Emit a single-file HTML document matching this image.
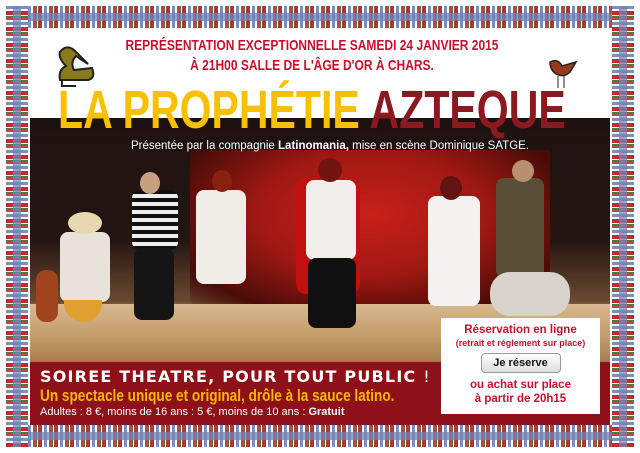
<!DOCTYPE html><html><head><meta charset="utf-8"><style>
*{margin:0;padding:0;box-sizing:border-box}
body{width:640px;height:453px;overflow:hidden;background:#fff;font-family:"Liberation Sans",sans-serif;position:relative}
.a{position:absolute}
.bh{position:absolute;background:
linear-gradient(180deg,transparent 0 7px,rgba(111,134,182,.75) 7px 15px,transparent 15px),
repeating-linear-gradient(90deg,#b83030 0 4px,#fff 4px 6px,#7a8fbf 6px 9px,#fff 9px 11px,#c84040 11px 14px,#3d7a3d 14px 15px,#fff 15px 16px)}
.bv{position:absolute;background:
linear-gradient(90deg,transparent 0 7px,rgba(111,134,182,.75) 7px 15px,transparent 15px),
repeating-linear-gradient(0deg,#b83030 0 4px,#fff 4px 6px,#7a8fbf 6px 9px,#fff 9px 11px,#c84040 11px 14px,#3d7a3d 14px 15px,#fff 15px 16px)}
.t{color:#c8102e;font-weight:bold;font-size:15px;white-space:nowrap;transform-origin:center;text-align:center}
.fig{position:absolute;border-radius:8px}
.nw{white-space:nowrap;transform-origin:left top}
</style></head><body>
<div class="bh" style="left:6px;top:6px;width:628px;height:22px"></div>
<div class="bh" style="left:6px;top:425px;width:628px;height:22px"></div>
<div class="bv" style="left:6px;top:6px;width:22px;height:441px"></div>
<div class="bv" style="left:612px;top:6px;width:22px;height:441px"></div>
<div class="a" style="left:28px;top:28px;width:584px;height:397px;background:#fff"></div>
<div class="a t" style="left:72px;top:37px;width:480px;transform:scaleX(.8)">REPRÉSENTATION EXCEPTIONNELLE SAMEDI 24 JANVIER 2015</div>
<div class="a t" style="left:72px;top:57px;width:480px;transform:scaleX(.8)">À 21H00 SALLE DE L'ÂGE D'OR À CHARS.</div>
<svg class="a" style="left:52px;top:42px" width="48" height="46"><path d="M8 10 Q14 2 22 8 L36 22 L24 14 Q18 20 22 28 L40 26 Q44 36 36 38 L8 38 Q6 28 14 24 Q6 16 8 10Z" fill="#8a7a1a" stroke="#222" stroke-width="2"/><path d="M10 38v6h14" stroke="#222" stroke-width="2" fill="none"/></svg>
<svg class="a" style="left:546px;top:52px" width="40" height="40"><path d="M4 10 Q12 6 16 14 L30 10 L24 20 Q18 26 10 22 Q4 18 4 10Z" fill="#9a3a1a" stroke="#222" stroke-width="1.5"/><path d="M12 24v12M18 24v12" stroke="#222"/></svg>
<div class="a" style="left:30px;top:118px;width:580px;height:244px;background:linear-gradient(180deg,#1e1210 0%,#241512 50%,#6a4a30 75%,#c9a070 82%,#b08858 100%)"></div>
<div class="a" style="left:190px;top:150px;width:360px;height:160px;background:radial-gradient(ellipse at 50% 40%,#c8201a 0%,#a01812 45%,#4a0c08 80%,transparent 100%)"></div>
<div class="a" style="left:30px;top:304px;width:580px;height:58px;background:linear-gradient(180deg,#d8b890,#c29a68 60%,#a67c4c)"></div>
<div class="fig" style="left:60px;top:232px;width:50px;height:70px;background:#e8e2da"></div>
<div class="fig" style="left:68px;top:212px;width:34px;height:22px;background:#e8d8b0;border-radius:50%"></div>
<div class="fig" style="left:36px;top:270px;width:22px;height:52px;background:#a0441e;border-radius:10px"></div>
<div class="fig" style="left:64px;top:300px;width:38px;height:22px;background:#e0a030;border-radius:0 0 20px 20px"></div>
<div class="fig" style="left:132px;top:190px;width:46px;height:60px;background:repeating-linear-gradient(0deg,#111 0 4px,#eee 4px 8px)"></div>
<div class="fig" style="left:134px;top:248px;width:40px;height:72px;background:#151515"></div>
<div class="fig" style="left:140px;top:172px;width:20px;height:22px;background:#c8a080;border-radius:50%"></div>
<div class="fig" style="left:196px;top:190px;width:50px;height:94px;background:#f0ece8"></div>
<div class="fig" style="left:212px;top:170px;width:20px;height:22px;background:#8a2010;border-radius:50%"></div>
<div class="fig" style="left:296px;top:178px;width:64px;height:116px;background:#c01010;border-radius:10px"></div>
<div class="fig" style="left:306px;top:180px;width:50px;height:80px;background:#f0eeea"></div>
<div class="fig" style="left:308px;top:258px;width:48px;height:70px;background:#101010"></div>
<div class="fig" style="left:318px;top:158px;width:24px;height:24px;background:#701510;border-radius:50%"></div>
<div class="fig" style="left:428px;top:196px;width:52px;height:110px;background:#f4f2ee"></div>
<div class="fig" style="left:440px;top:176px;width:22px;height:24px;background:#601510;border-radius:50%"></div>
<div class="fig" style="left:496px;top:178px;width:48px;height:100px;background:#5a4e38"></div>
<div class="fig" style="left:490px;top:272px;width:80px;height:44px;background:#d8d4cc;border-radius:20px"></div>
<div class="fig" style="left:512px;top:160px;width:22px;height:22px;background:#b89070;border-radius:50%"></div>
<div class="a" style="left:30px;top:140px;width:580px;text-align:center;color:#fff;font-size:11.5px;padding-left:20px;white-space:nowrap">Présentée par la compagnie <b>Latinomania,</b> mise en scène Dominique SATGE.</div>
<div class="a nw" style="left:58px;top:84px;font-weight:bold;font-size:54px;line-height:52px;transform:scaleX(.76)"><span style="color:#f8c000">LA PROPHÉTIE</span> <span style="color:#8c1820">AZTEQUE</span></div>
<div class="a" style="left:30px;top:362px;width:580px;height:63px;background:#8e1018"></div>
<div class="a nw" style="left:40px;top:367px;color:#fff;font-family:'DejaVu Sans',sans-serif;font-weight:bold;font-size:16px;letter-spacing:1.2px">SOIREE THEATRE, POUR TOUT PUBLIC <span style="font-weight:normal">!</span></div>
<div class="a nw" style="left:40px;top:386px;color:#f8b800;font-weight:bold;font-size:17px;transform:scaleX(.8)">Un spectacle unique et original, drôle à la sauce latino.</div>
<div class="a nw" style="left:40px;top:406px;color:#fff;font-size:11px">Adultes : 8 €, moins de 16 ans : 5 €, moins de 10 ans : <b>Gratuit</b></div>
<div class="a" style="left:441px;top:318px;width:159px;height:96px;background:#fff;text-align:center;color:#c8102e;font-weight:bold">
<div style="font-size:11.5px;margin-top:6px">Réservation en ligne</div>
<div style="font-size:9px;margin-top:2px">(retrait et réglement sur place)</div>
<div style="margin:5px auto 0;width:80px;height:20px;border:1px solid #999;border-radius:4px;background:linear-gradient(#fff,#ddd);color:#111;font-size:11px;line-height:18px">Je réserve</div>
<div style="font-size:11.5px;margin-top:5px;line-height:14px">ou achat sur place<br>à partir de 20h15</div>
</div>
</body></html>
